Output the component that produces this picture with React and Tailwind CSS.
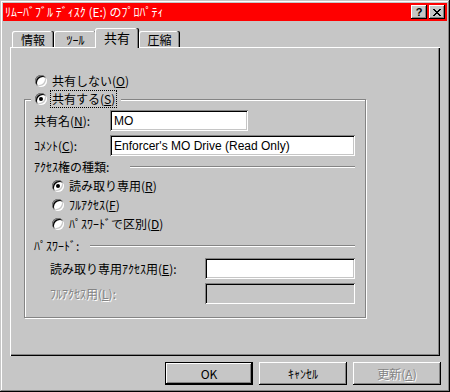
import React from "react";

function Radio({ checked }) {
  return (
    <span className="w-[12px] h-[12px] shrink-0 rounded-full bg-white flex items-center justify-center shadow-[inset_1px_1px_0_#848484,inset_-1px_-1px_0_#fff,inset_2px_2px_0_#000,inset_-2px_-2px_0_#c6c6c6]">
      {checked && <span className="w-[4px] h-[4px] rounded-full bg-black" />}
    </span>
  );
}

function Tab({ children, w, selected }) {
  if (selected) {
    return (
      <div
        className="relative z-10 -ml-[2px] h-[20px] rounded-t-[2px] bg-[#c6c6c6] flex items-start justify-center pt-[3px] text-[13px] shadow-[inset_-1px_0_0_#000,inset_-2px_0_0_#848484,inset_1px_1px_0_#fff]"
        style={{ width: w }}
      >
        {children}
      </div>
    );
  }
  return (
    <div
      className="h-[16px] mb-[1px] rounded-t-[2px] bg-[#c6c6c6] flex items-center justify-center pt-[1px] shadow-[inset_-1px_0_0_#000,inset_-2px_0_0_#848484,inset_1px_1px_0_#fff]"
      style={{ width: w }}
    >
      {children}
    </div>
  );
}

const sunken =
  "shadow-[inset_1px_1px_0_#848484,inset_-1px_-1px_0_#fff,inset_2px_2px_0_#000,inset_-2px_-2px_0_#c6c6c6]";

function U({ children }) {
  return <span className="underline underline-offset-[1px]">{children}</span>;
}

export default function App() {
  return (
    <div className="w-[450px] h-[392px] bg-[#c6c6c6] p-[3px] flex flex-col font-['Noto_Sans_CJK_JP',sans-serif] text-[12px] leading-none text-black shadow-[inset_-1px_-1px_0_#000,inset_1px_1px_0_#c6c6c6,inset_-2px_-2px_0_#848484,inset_2px_2px_0_#fff]">
      {/* Title bar */}
      <div className="h-[18px] bg-[#ff0000] flex items-center justify-between pl-[2px] pr-[2px]">
        <span className="text-white text-[12px] whitespace-pre">ﾘﾑｰﾊﾞﾌﾞﾙ ﾃﾞｨｽｸ (E:) のﾌﾟﾛﾊﾟﾃｨ</span>
        <div className="flex gap-[2px]">
          <div className="w-[16px] h-[14px] bg-[#c6c6c6] flex items-center justify-center font-['Liberation_Sans',sans-serif] font-bold text-[11px] shadow-[inset_-1px_-1px_0_#000,inset_1px_1px_0_#fff,inset_-2px_-2px_0_#848484]">
            ?
          </div>
          <div className="w-[16px] h-[14px] bg-[#c6c6c6] flex items-center justify-center shadow-[inset_-1px_-1px_0_#000,inset_1px_1px_0_#fff,inset_-2px_-2px_0_#848484]">
            <svg width="8" height="7" viewBox="0 0 8 7" shapeRendering="crispEdges">
              <path d="M0 0h2v1h-2z M6 0h2v1h-2z M1 1h2v1h-2z M5 1h2v1h-2z M2 2h4v1h-4z M3 3h2v1h-2z M2 4h4v1h-4z M1 5h2v1h-2z M5 5h2v1h-2z M0 6h2v1h-2z M6 6h2v1h-2z" fill="#000" />
            </svg>
          </div>
        </div>
      </div>

      <div className="px-[7px] flex flex-col">
        {/* Tabs */}
        <div className="mt-[7px] h-[20px] -mb-[1px] relative z-10 flex items-end pl-[2px]">
          <Tab w={42}>情報</Tab>
          <Tab w={43}>ﾂｰﾙ</Tab>
          <Tab w={44} selected>共有</Tab>
          <Tab w={41}>圧縮</Tab>
        </div>

        {/* Panel */}
        <div className="h-[309px] bg-[#c6c6c6] flex flex-col shadow-[inset_1px_1px_0_#fff,inset_-1px_-1px_0_#000,inset_-2px_-2px_0_#848484]">
          <div className="mt-[26px] ml-[25px] h-[16px] flex items-center gap-[5px]">
            <Radio />
            <span>
              共有しない(<U>O</U>)
            </span>
          </div>

          <fieldset className="mt-[1px] ml-[14px] w-[342px] border border-[#848484] pl-[9px] pr-[10px] pt-[2px] pb-[13px] shadow-[inset_1px_1px_0_#fff,1px_1px_0_#fff]">
            <legend className="ml-[-3px] pl-[4px] pr-[4px] h-[18px] flex items-center bg-[#c6c6c6]">
              <span className="flex items-center gap-[3px]">
                <Radio checked />
                <span className="h-[18px] px-[1px] flex items-center border border-dotted border-black">
                  共有する(<U>S</U>)
                </span>
              </span>
            </legend>

            <div className="flex items-center h-[21px]">
              <span className="w-[76px]">
                共有名(<U>N</U>):
              </span>
              <div className={`w-[138px] h-[21px] bg-white flex items-center pl-[4px] font-['Liberation_Sans',sans-serif] ${sunken}`}>
                MO
              </div>
            </div>
            <div className="mt-[4px] flex items-center h-[21px]">
              <span className="w-[76px]">
                ｺﾒﾝﾄ(<U>C</U>):
              </span>
              <div className={`w-[245px] h-[21px] bg-white flex items-center pl-[4px] font-['Liberation_Sans',sans-serif] whitespace-pre ${sunken}`}>
                Enforcer's MO Drive (Read Only)
              </div>
            </div>

            <div className="mt-[4px] h-[14px] flex items-center justify-between">
              <span>ｱｸｾｽ権の種類:</span>
              <div className="w-[225px] h-[2px] border-t border-t-[#848484] border-b border-b-white" />
            </div>

            <div className="mt-[2px] pl-[18px] flex flex-col">
              <div className="h-[19px] flex items-center gap-[5px]">
                <Radio checked />
                <span>
                  読み取り専用(<U>R</U>)
                </span>
              </div>
              <div className="h-[19px] flex items-center gap-[5px]">
                <Radio />
                <span>
                  ﾌﾙｱｸｾｽ(<U>F</U>)
                </span>
              </div>
              <div className="h-[19px] flex items-center gap-[5px]">
                <Radio />
                <span>
                  ﾊﾟｽﾜｰﾄﾞで区別(<U>D</U>)
                </span>
              </div>
            </div>

            <div className="mt-[6px] h-[14px] flex items-center justify-between">
              <span>ﾊﾟｽﾜｰﾄﾞ:</span>
              <div className="w-[265px] h-[2px] border-t border-t-[#848484] border-b border-b-white" />
            </div>

            <div className="mt-[5px] h-[21px] flex items-center justify-between pl-[16px]">
              <span>
                読み取り専用ｱｸｾｽ用(<U>E</U>):
              </span>
              <div className={`w-[150px] h-[21px] bg-white ${sunken}`} />
            </div>
            <div className="mt-[4px] h-[21px] flex items-center justify-between pl-[16px]">
              <span className="text-[#848484] [text-shadow:1px_1px_0_#fff]">
                ﾌﾙｱｸｾｽ用(<U>L</U>):
              </span>
              <div className={`w-[150px] h-[21px] bg-[#c6c6c6] ${sunken}`} />
            </div>
          </fieldset>
        </div>

        {/* Buttons */}
        <div className="mt-[6px] -mr-[1px] flex justify-end gap-[6px]">
          <div className="w-[88px] h-[23px] border border-black flex items-center justify-center shadow-[inset_-1px_-1px_0_#000,inset_1px_1px_0_#fff,inset_-2px_-2px_0_#848484]">
            OK
          </div>
          <div className="w-[88px] h-[23px] flex items-center justify-center shadow-[inset_-1px_-1px_0_#000,inset_1px_1px_0_#fff,inset_-2px_-2px_0_#848484]">
            ｷｬﾝｾﾙ
          </div>
          <div className="w-[88px] h-[23px] flex items-center justify-center shadow-[inset_-1px_-1px_0_#000,inset_1px_1px_0_#fff,inset_-2px_-2px_0_#848484]">
            <span className="text-[#848484] [text-shadow:1px_1px_0_#fff]">
              更新(<U>A</U>)
            </span>
          </div>
        </div>
      </div>
    </div>
  );
}
